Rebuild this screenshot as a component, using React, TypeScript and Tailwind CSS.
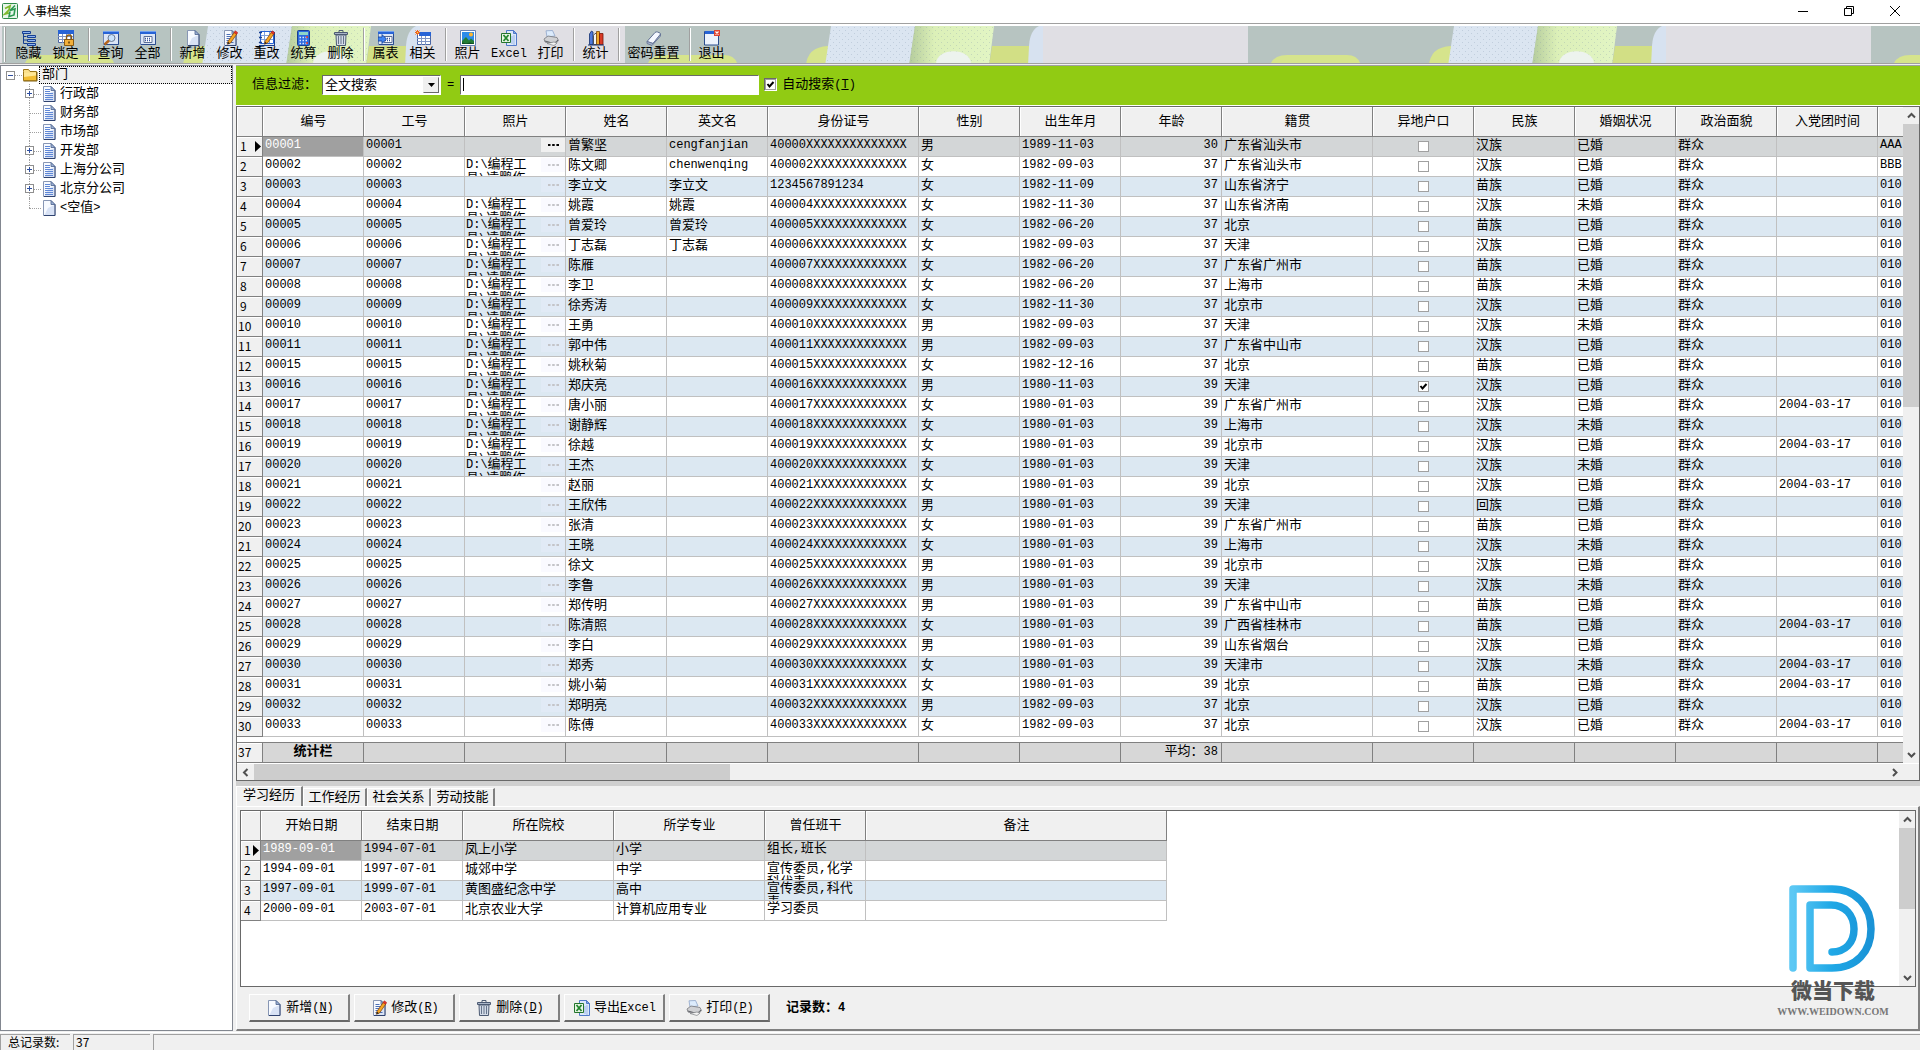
import React from 'react';

const CJK = "font-['Liberation_Mono','Noto_Sans_CJK_SC',monospace]";

/* ---------- icons ---------- */

function Svg({ children }: { children: React.ReactNode }) {
  return (
    <svg width="16" height="16" viewBox="0 0 16 16" aria-hidden="true" className="shrink-0">
      {children}
    </svg>
  );
}

const PageShape = () => (
  <>
    <path d="M2.500 .5h7.500l4 4v11h-11.500z" fill="#f7faff" stroke="#8796b4" />
    <path d="M7 8l6.500-3v10H3.500z" fill="#cfdcf3" opacity=".8" />
    <path d="M14 4.500v11H3" fill="none" stroke="#2f4370" />
    <path d="M10 .5v4h4z" fill="#9db2d6" stroke="#4a5f8c" strokeWidth=".8" />
  </>
);
const PencilShape = () => (
  <>
    <path d="M6 11.500L12.500 2l2.500 1.700L8.500 13l-3 1.200z" fill="#f5a623" stroke="#8a4b10" strokeWidth=".8" />
    <path d="M12 2.700L13.300.8l2.400 1.700-1.200 1.900z" fill="#e3362b" stroke="#a31d14" strokeWidth=".5" />
    <path d="M5.500 14.200l.5-2.400 1.900 1.400z" fill="#222" />
  </>
);
const WindowShape = () => (
  <>
    <path d="M.5 1.500h15v13H.5z" fill="#dbe5f6" stroke="#6f86b4" />
    <path d="M15.500 2v12.500H1" fill="none" stroke="#2b4c8f" />
    <path d="M0 1h16v3H0z" fill="#2763d6" />
    <path d="M0 1h16v1H0z" fill="#6fa0f0" />
  </>
);
const GridDots = ({ x }: { x: number }) => (
  <>
    <path d={`M${x} 6.500h8v6h-8z`} fill="#fff" stroke="#5a6d96" />
    <path d={`M${x + 1} 8.500h6M${x + 1} 10.500h6`} stroke="#3c57a0" strokeDasharray="1 1" strokeWidth="1.500" />
  </>
);

const icons: Record<string, React.ReactNode> = {
  tree: (
    <Svg>
      <path d="M2.500 4v9.500h4M2.500 6.500h3M2.500 10h4" fill="none" stroke="#173f91" />
      <path d="M1.500 1.500h8v2h-8zM6.500 5.500h8v2h-8zM6.500 9.500h8v2h-8zM6.500 13.500h8v2h-8z" fill="#8db4f4" stroke="#173f91" />
    </Svg>
  ),
  lock: (
    <Svg>
      <path d="M.5 .5h15v12H.5z" fill="#fff" stroke="#4a66a5" />
      <path d="M0 0h16v4H0z" fill="#2763d6" />
      <path d="M0 6.500h15M0 9.500h15M4.500 4v9M8.500 4v9M12.500 4v9" stroke="#7e93c4" />
      <path d="M8.500 10V7.500a2.500 2.500 0 015 0V10" fill="none" stroke="#8a5a12" strokeWidth="1.400" />
      <path d="M6.500 9.500h9v6h-9z" fill="#f3b13c" stroke="#8a5a12" />
      <path d="M11 11.500v2" stroke="#5b3a06" strokeWidth="1.500" />
    </Svg>
  ),
  query: (
    <Svg>
      <WindowShape />
      <circle cx="8.500" cy="8" r="3.500" fill="#c9e2fb" stroke="#6b7b94" />
      <path d="M6 10.500l-4.500 4" stroke="#b5651d" strokeWidth="2.500" />
    </Svg>
  ),
  all: (
    <Svg>
      <WindowShape />
      <GridDots x={4} />
    </Svg>
  ),
  page: (
    <Svg>
      <PageShape />
    </Svg>
  ),
  edit: (
    <Svg>
      <PageShape />
      <path d="M4.500 4.500h4M4.500 6.500h6M4.500 8.500h4M4.500 10.500h3M4.500 12.500h7" stroke="#4b6fb5" />
      <PencilShape />
    </Svg>
  ),
  batch: (
    <Svg>
      <path d="M1.500 1.500h13v12h-13z" fill="#fff" stroke="#2763d6" />
      <path d="M0 15.500h16M15.500 2v13" stroke="#173f91" />
      <path d="M2 5.500h12M2 9.500h12M5.500 2v11M10.500 2v11" stroke="#7fa0dc" />
      <path d="M0 2.500h3M0 7.500h3M0 12.500h3" stroke="#173f91" strokeWidth="1.500" />
      <PencilShape />
    </Svg>
  ),
  calc: (
    <Svg>
      <rect x="1.500" y=".5" width="12" height="15" rx="1" fill="#2d6be0" stroke="#173f91" />
      <path d="M3 2h9v3H3z" fill="#8fd6c8" />
      <path d="M3.500 7.500h8M3.500 10.500h8M3.500 13.500h8" stroke="#dfe9ff" strokeWidth="1.500" strokeDasharray="1.500 1.500" />
      <path d="M10 7h2M10 13h2" stroke="#e3362b" strokeWidth="1.500" />
    </Svg>
  ),
  trash: (
    <Svg>
      <path d="M6 2V.5h4V2" fill="none" stroke="#4c5a73" />
      <path d="M1.500 2.500h13v2h-13z" fill="#a9b5c8" stroke="#4c5a73" />
      <path d="M3 5h10l-.5 10.500h-9z" fill="#d3dbe7" stroke="#4c5a73" />
      <path d="M5.500 6v8M8 6v8M10.500 6v8" stroke="#66748c" />
    </Svg>
  ),
  subTable: (
    <Svg>
      <WindowShape />
      <GridDots x={6} />
      <path d="M0 7h4V4.500L8.500 9 4 13.500V11H0z" fill="#3f84f2" stroke="#123c93" strokeWidth=".8" />
    </Svg>
  ),
  related: (
    <Svg>
      <path d="M2.500 3.500h13v11h-13z" fill="#fff" stroke="#4a66a5" />
      <path d="M4 2h12v4H4z" fill="#2763d6" />
      <path d="M2 8.500h13M2 11.500h13M6.500 6v9M10.500 6v9" stroke="#7e93c4" />
      <path d="M2.500 0v5M0 2.500h5M.5.5l4 4M4.500.5l-4 4" stroke="#f0661e" />
      <path d="M2 2h1v1H2z" fill="#ffe45a" />
    </Svg>
  ),
  photo: (
    <Svg>
      <path d="M.5 .5h15v15H.5z" fill="#fff" stroke="#6883b5" />
      <path d="M2 2h12v9H2z" fill="#2c8bea" />
      <circle cx="11" cy="4.500" r="2" fill="#ffb52e" />
      <path d="M2 14v-3l4-4 3 3.500 2-2 3 2.500v3z" fill="#237c35" />
      <path d="M2 12.500l4 1 4-1 4 1V14H2z" fill="#0e4c23" />
    </Svg>
  ),
  excel: (
    <Svg>
      <path d="M5.500 .5h7l3 3v12h-10z" fill="#dce8fa" stroke="#4f79c9" />
      <path d="M12.500.5v3h3z" fill="#7ea4e2" stroke="#4f79c9" />
      <path d="M11 6v8M13 5v10" stroke="#9db9e8" />
      <path d="M.5 3.500h9v9h-9z" fill="#e9f6e6" stroke="#24752c" />
      <path d="M2.500 5l5 6M7.500 5l-5 6" stroke="#24872f" strokeWidth="1.800" />
    </Svg>
  ),
  print: (
    <Svg>
      <path d="M4 7L3 .8 9.500 .5 12 6z" fill="#dcebfc" stroke="#8ea5c9" strokeWidth=".8" />
      <path d="M1 9l4-3 9 1.500 1.500 3-3.500 4L2 12z" fill="#d0d1d4" stroke="#77797e" strokeWidth=".8" />
      <path d="M2 11l9 2.500 4-3.500" fill="none" stroke="#606268" />
      <path d="M4 13.500l7 2 3-2.500-3-1z" fill="#f4f4f4" stroke="#808287" strokeWidth=".7" />
    </Svg>
  ),
  books: (
    <Svg>
      <path d="M1.500 4l2-3 1.500 1v12.500H1.500z" fill="#4f79d9" stroke="#14306f" strokeWidth=".8" />
      <path d="M5.500 5.500l1.500-2h2v11H5.500z" fill="#f4f4f4" stroke="#333" strokeWidth=".8" />
      <path d="M8.500 3.500V1.500h3v13h-3z" fill="#f0a92c" stroke="#7d4a05" strokeWidth=".8" />
      <path d="M11.500 3.500h3.500v11h-3.500z" fill="#d93a26" stroke="#751509" strokeWidth=".8" />
      <path d="M0 15h16" stroke="#14306f" />
    </Svg>
  ),
  eraser: (
    <Svg>
      <path d="M1 11.500L9 2.500q1-1 2.500-.5l2.500 1q1 .8.3 1.800L7 13.500z" fill="#f4f7ff" stroke="#5f6f92" />
      <path d="M1 11.500v2l5 2 8.500-9.500V4L7 13.500z" fill="#a8b4d0" stroke="#5f6f92" strokeWidth=".8" />
    </Svg>
  ),
  exit: (
    <Svg>
      <path d="M.5 1.500h14v13.500H.5z" fill="#eef3fc" stroke="#2b4c8f" />
      <path d="M1 1h12v3H1z" fill="#2763d6" />
      <path d="M10 0h6v6h-6z" fill="#e0442f" />
      <path d="M11.500 1.500l3 3M14.500 1.500l-3 3" stroke="#fff" strokeWidth="1.200" />
    </Svg>
  ),
  folder: (
    <Svg>
      <path d="M1.500 4.500v-2h5l1.500 2h6.500v9h-13z" fill="#fbe08b" stroke="#9c7416" />
      <path d="M2 6h12v7.500H2z" fill="#f3bd32" />
      <path d="M2 6h12v2.500L2 10z" fill="#ffe795" />
      <path d="M1.500 14h13.500V5" fill="none" stroke="#7a5a0d" />
    </Svg>
  ),
  doc: (
    <Svg>
      <PageShape />
      <path d="M4 3.500h5M4 5.500h5M4 7.500h8M4 9.500h8M4 11.500h8M4 13.500h8" stroke="#5f87d6" />
    </Svg>
  ),
};

function Chevron({ dir }: { dir: 'up' | 'down' | 'left' | 'right' }) {
  const d = {
    up: 'M1 6.500L4.500 3 8 6.500',
    down: 'M1 3L4.500 6.500 8 3',
    left: 'M6.500 1L3 4.500 6.500 8',
    right: 'M3 1l3.500 3.500L3 8',
  }[dir];
  return (
    <svg width="9" height="9" viewBox="0 0 9 9" aria-hidden="true">
      <path d={d} fill="none" stroke="#505050" strokeWidth="2" />
    </svg>
  );
}

/* ---------- window chrome ---------- */

function TitleBar() {
  return (
    <header className="flex h-[23px] shrink-0 items-center bg-white pb-px pr-0.5">
      <svg width="16" height="16" viewBox="0 0 16 16" className="ml-0.5" aria-hidden="true">
        <rect x=".5" y=".5" width="15" height="15" rx="1" fill="#e8f6ea" stroke="#2e8b4a" />
        <path d="M3 5.500l5-2.500-1 4-4 4 4-1" fill="none" stroke="#7fb92d" strokeWidth="1.800" />
        <path d="M13 2.500L8 7.500l5-1.500-1 6-5 1.500 1-5" fill="none" stroke="#2c9a52" strokeWidth="1.600" />
      </svg>
      <h1 className="ml-[5px] flex-1 font-['Noto_Sans_CJK_SC',sans-serif] text-xs leading-5">人事档案</h1>
      <button type="button" aria-label="最小化" className="flex w-[46px] justify-center">
        <svg width="10" height="10" viewBox="0 0 10 10"><path d="M0 5.500h10" stroke="#000" /></svg>
      </button>
      <button type="button" aria-label="还原" className="flex w-[46px] justify-center">
        <svg width="10" height="10" viewBox="0 0 10 10">
          <path d="M.5 2.500h7v7h-7zM2.500 2.500v-2h7v7h-2" fill="none" stroke="#000" />
        </svg>
      </button>
      <button type="button" aria-label="关闭" className="flex w-[46px] justify-center">
        <svg width="10" height="10" viewBox="0 0 10 10"><path d="M0 0l10 10M10 0L0 10" stroke="#000" /></svg>
      </button>
    </header>
  );
}

function ToolbarBackdrop() {
  return (
    <svg className="absolute inset-0 h-full w-full" aria-hidden="true">
      <defs>
        <pattern id="dots" width="6" height="6" patternUnits="userSpaceOnUse">
          <path d="M1 1h1v1H1zM4 4h1v1H4z" fill="#7d93a8" opacity=".28" />
        </pattern>
        <linearGradient id="leaf" x1="0" x2="1">
          <stop offset="0" stopColor="#b4cb9c" />
          <stop offset=".3" stopColor="#dcf0b8" />
          <stop offset="1" stopColor="#e2f5c4" />
        </linearGradient>
        <pattern id="tile" x="2" y="0" width="623" height="40" patternUnits="userSpaceOnUse">
          <path d="M0 0h623v40H0z" fill="#e0dfe4" />
          <path d="M0 0h418v40H0z" fill="#b7c4c1" />
          <path d="M23 37q4-8 16-8h60q10 0 13 8v3H23z" fill="#d6e48c" />
          <path d="M181 40q1-19 22-20v20z" fill="#d6e48c" />
          <path d="M206 0h84l-6 40h-84z" fill="#dbe5f1" />
          <path d="M290 0h79l-5 40h-80z" fill="url(#leaf)" />
          <path d="M206 0h163l-5 40H200z" fill="url(#dots)" />
          <path d="M311 38c0-17 35-17 35 0z" fill="#edf3ee" />
          <path d="M367 20h38v20h-41z" fill="#d2df85" />
          <path d="M418 0h-4q-9 4-10 20l-1 20h15z" fill="#d7e2f0" />
        </pattern>
      </defs>
      <rect width="100%" height="100%" fill="url(#tile)" />
    </svg>
  );
}

type Tool = { label: string; icon: string; size?: 'md' | 'lg' } | null;
const tools: Tool[] = [
  { label: '隐藏', icon: 'tree' }, { label: '锁定', icon: 'lock' }, null,
  { label: '查询', icon: 'query' }, { label: '全部', icon: 'all' }, null,
  { label: '新增', icon: 'page' }, { label: '修改', icon: 'edit' }, { label: '重改', icon: 'batch' },
  { label: '统算', icon: 'calc' }, { label: '删除', icon: 'trash' }, null,
  { label: '属表', icon: 'subTable' }, { label: '相关', icon: 'related' }, null,
  { label: '照片', icon: 'photo' }, { label: 'Excel', icon: 'excel', size: 'md' }, { label: '打印', icon: 'print' }, null,
  { label: '统计', icon: 'books' }, null,
  { label: '密码重置', icon: 'eraser', size: 'lg' }, null,
  { label: '退出', icon: 'exit' },
];

function Toolbar() {
  return (
    <div className="shrink-0 border-t border-[#a0a0a0] bg-white pt-0.5">
      <div className="relative h-[38px] overflow-hidden border-b border-[#a0a0a0]">
        <ToolbarBackdrop />
        <div className="relative flex h-full items-stretch pl-1">
          <div className="my-px mr-1 w-[2px] border-l border-white bg-[#a0a0a0]" />
          {tools.map((t, i) =>
            t ? (
              <button
                key={t.label}
                type="button"
                className={`flex flex-col items-center pt-1 ${t.size === 'lg' ? 'w-[63px]' : t.size === 'md' ? 'w-[46px]' : 'w-[37px]'}`}
              >
                {icons[t.icon]}
                <span className={t.label === 'Excel' ? 'text-xs leading-4' : 'text-[13px] leading-4'}>{t.label}</span>
              </button>
            ) : (
              <div key={`s${i}`} className="my-0.5 ml-1 mr-0.5 w-[2px] border-r border-white bg-[#a0a0a0]" />
            ),
          )}
        </div>
      </div>
    </div>
  );
}

/* ---------- department tree ---------- */

const departments = [
  { name: '行政部', open: true }, { name: '财务部' }, { name: '市场部' }, { name: '开发部', open: true },
  { name: '上海分公司', open: true }, { name: '北京分公司', open: true }, { name: '<空值>', blank: true },
];

function Expander({ minus, label }: { minus?: boolean; label: string }) {
  return (
    <button type="button" aria-label={label} className="relative z-10 flex size-[9px] items-center justify-center border border-[#8f8f8f] bg-white">
      <svg width="5" height="5" viewBox="0 0 5 5">
        <path d={minus ? 'M0 2.500h5' : 'M0 2.500h5M2.500 0v5'} stroke="#2f4f9f" />
      </svg>
    </button>
  );
}

function DepartmentTree() {
  return (
    <nav aria-label="部门" className="w-[233px] shrink-0 border border-[#828790] bg-white text-[13px]">
      <div className="flex h-[18px] items-center pl-[5px]">
        <Expander minus label="折叠 部门" />
        <span className="w-[7px] border-t border-dotted border-[#a0a0a0]" />
        {icons.folder}
        <span className="ml-px flex-1 border border-dotted border-black bg-[#f0f0f0] pl-[2px] leading-[16px]">部门</span>
      </div>
      <ul>
        {departments.map((d, i) => (
          <li key={d.name} className="flex h-[19px] items-center pl-6">
            <span className="relative flex h-full w-4 items-center">
              <span className={`absolute left-1 top-0 border-l border-dotted border-[#a0a0a0] ${i === departments.length - 1 ? 'h-1/2' : 'h-full'}`} />
              <span className="absolute left-1 right-0 top-1/2 border-t border-dotted border-[#a0a0a0]" />
              {d.open && <Expander label={`展开 ${d.name}`} />}
            </span>
            {d.blank ? icons.page : icons.doc}
            <span className="ml-[3px] leading-[17px]">
              {d.blank ? (<><span className="text-xs">&lt;</span>空值<span className="text-xs">&gt;</span></>) : d.name}
            </span>
          </li>
        ))}
      </ul>
    </nav>
  );
}

/* ---------- filter ---------- */

const SUNKEN = 'border border-t-[#696969] border-l-[#696969] border-r-white border-b-white bg-white';

function TickBox({ checked, label, id }: { checked?: boolean; label?: string; id?: string }) {
  return (
    <span className="relative inline-block size-[11px]">
      <input
        id={id}
        type="checkbox"
        defaultChecked={checked}
        aria-label={label}
        className="peer block size-[11px] appearance-none border border-[#a0a0a0] bg-white"
      />
      <svg width="11" height="11" viewBox="0 0 11 11" className="pointer-events-none absolute inset-0 hidden peer-checked:block">
        <path d="M2.500 5l2 2.500 4-4.500" fill="none" stroke="#000" strokeWidth="2" />
      </svg>
    </span>
  );
}

function FilterBar() {
  return (
    <form className="flex h-[39px] items-center bg-[#91cb13] pb-0.5 pl-4 text-[13px]" onSubmit={(e) => e.preventDefault()}>
      <label htmlFor="field" className="w-[70px]">信息过滤：</label>
      <div className={`relative h-5 w-[119px] ${SUNKEN}`}>
        <select id="field" className="h-full w-full appearance-none bg-transparent pl-[2px] leading-[16px] outline-none">
          <option>全文搜索</option>
        </select>
        <span className="pointer-events-none absolute bottom-px right-px top-px flex w-4 items-center justify-center border border-b-[#696969] border-l-[#f0f0f0] border-r-[#696969] border-t-[#f0f0f0] bg-[#f0f0f0]">
          <svg width="7" height="4" viewBox="0 0 7 4"><path d="M0 0h7L3.500 4z" /></svg>
        </span>
      </div>
      <span className="mx-1.5 text-xs">=</span>
      <div className={`flex h-5 w-[299px] items-center ${SUNKEN}`}>
        <span className="ml-0.5 h-[13px] w-px bg-black" />
        <input aria-label="搜索内容" className="h-full min-w-0 flex-1 bg-transparent outline-none" />
      </div>
      <span className="ml-[5px] flex size-[13px] items-center justify-center border border-b-white border-l-[#696969] border-r-white border-t-[#696969]">
        <TickBox id="auto" checked />
      </span>
      <label htmlFor="auto" className="ml-[5px]">
        自动搜索<span className="text-xs">(<u>T</u>)</span>
      </label>
    </form>
  );
}

/* ---------- main grid ---------- */

const columns = [
  '编号', '工号', '照片', '姓名', '英文名', '身份证号', '性别', '出生年月', '年龄', '籍贯',
  '异地户口', '民族', '婚姻状况', '政治面貌', '入党团时间', '',
];

/* code, photo, name, English name, sex, birthday, age, origin, ethnicity, married, joined */
type Person = [string, number, string, string, string, string, number, string, string, number, number];
const people: Person[] = [
  ['00001', 0, '曾繁坚', 'cengfanjian', '男', '1989-11-03', 30, '广东省汕头市', '汉', 1, 0],
  ['00002', 1, '陈文卿', 'chenwenqing', '女', '1982-09-03', 37, '广东省汕头市', '汉', 1, 0],
  ['00003', 0, '李立文', '李立文', '女', '1982-11-09', 37, '山东省济宁', '苗', 1, 0],
  ['00004', 1, '姚霞', '姚霞', '女', '1982-11-30', 37, '山东省济南', '汉', 0, 0],
  ['00005', 1, '曾爱玲', '曾爱玲', '女', '1982-06-20', 37, '北京', '苗', 1, 0],
  ['00006', 1, '丁志磊', '丁志磊', '女', '1982-09-03', 37, '天津', '汉', 1, 0],
  ['00007', 1, '陈雁', '', '女', '1982-06-20', 37, '广东省广州市', '苗', 1, 0],
  ['00008', 1, '李卫', '', '女', '1982-06-20', 37, '上海市', '苗', 0, 0],
  ['00009', 1, '徐秀涛', '', '女', '1982-11-30', 37, '北京市', '汉', 1, 0],
  ['00010', 1, '王勇', '', '男', '1982-09-03', 37, '天津', '汉', 0, 0],
  ['00011', 1, '郭中伟', '', '男', '1982-09-03', 37, '广东省中山市', '汉', 1, 0],
  ['00015', 1, '姚秋菊', '', '女', '1982-12-16', 37, '北京', '苗', 1, 0],
  ['00016', 1, '郑庆亮', '', '男', '1980-11-03', 39, '天津', '汉', 1, 0],
  ['00017', 1, '唐小丽', '', '女', '1980-01-03', 39, '广东省广州市', '汉', 1, 1],
  ['00018', 1, '谢静辉', '', '女', '1980-01-03', 39, '上海市', '汉', 0, 0],
  ['00019', 1, '徐越', '', '女', '1980-01-03', 39, '北京市', '汉', 1, 1],
  ['00020', 1, '王杰', '', '女', '1980-01-03', 39, '天津', '汉', 0, 0],
  ['00021', 0, '赵丽', '', '女', '1980-01-03', 39, '北京', '汉', 1, 1],
  ['00022', 0, '王欣伟', '', '男', '1980-01-03', 39, '天津', '回', 1, 0],
  ['00023', 0, '张清', '', '女', '1980-01-03', 39, '广东省广州市', '苗', 1, 0],
  ['00024', 0, '王晓', '', '女', '1980-01-03', 39, '上海市', '汉', 0, 0],
  ['00025', 0, '徐文', '', '男', '1980-01-03', 39, '北京市', '汉', 1, 0],
  ['00026', 0, '李鲁', '', '男', '1980-01-03', 39, '天津', '汉', 0, 0],
  ['00027', 0, '郑传明', '', '男', '1980-01-03', 39, '广东省中山市', '苗', 1, 0],
  ['00028', 0, '陈清照', '', '女', '1980-01-03', 39, '广西省桂林市', '苗', 1, 1],
  ['00029', 0, '李白', '', '男', '1980-01-03', 39, '山东省烟台', '汉', 1, 0],
  ['00030', 0, '郑秀', '', '女', '1980-01-03', 39, '天津市', '汉', 0, 1],
  ['00031', 0, '姚小菊', '', '女', '1980-01-03', 39, '北京', '苗', 1, 1],
  ['00032', 0, '郑明亮', '', '男', '1982-09-03', 37, '北京', '汉', 1, 0],
  ['00033', 0, '陈傅', '', '女', '1982-09-03', 37, '北京', '汉', 1, 1],
];

function idNumber(code: string) {
  if (code === '00001') return '40000XXXXXXXXXXXXXX';
  if (code === '00003') return '1234567891234';
  return `4${code}XXXXXXXXXXXXX`;
}

const HEAD = 'border-b border-r border-[#808080] bg-[#f0f0f0] p-0 text-[13px] font-normal';

function HeadCell({ children }: { children?: React.ReactNode }) {
  return (
    <th scope="col" className={HEAD}>
      <div className="flex h-[29px] items-center justify-center overflow-hidden border-l border-t border-white">{children}</div>
    </th>
  );
}

function IndexCell({ n, current }: { n: number; current?: boolean }) {
  return (
    <th scope="row" className="border-b border-r border-[#808080] bg-[#f0f0f0] p-0 font-normal">
      <div className="flex h-[19px] items-center justify-between overflow-hidden border-l border-t border-white pb-0.5 font-['Noto_Sans_CJK_SC',sans-serif] text-xs leading-4">
        <span className={n < 10 ? 'pl-0.5' : ''}>{n}</span>
        {current && (
          <svg width="6" height="11" viewBox="0 0 6 11" className="mr-px shrink-0"><path d="M0 0l6 5.500L0 11z" /></svg>
        )}
      </div>
    </th>
  );
}

function TextCell({ text, right, selected, wrap }: { text: string; right?: boolean; selected?: boolean; wrap?: boolean }) {
  const latin = /^[\x20-\x7e]*$/.test(text);
  return (
    <td className={`border-b border-r border-[#c0c0c0] p-0 ${selected ? 'bg-[#a0a0a0] text-white' : ''}`}>
      <div
        className={`h-[19px] overflow-hidden pl-[2px] ${right ? 'pr-[3px] text-right' : ''} ${latin ? 'text-xs' : 'text-[13px]'} ${wrap ? 'w-[90px] whitespace-normal break-all pt-px leading-[14px]' : 'whitespace-nowrap leading-[17px]'}`}
      >
        {text}
      </div>
    </td>
  );
}

function rowTone(i: number) {
  return i === 0 ? 'bg-[#d3d6d7]' : i % 2 === 0 ? 'bg-[#dce8f2]' : 'bg-white';
}

function PhotoCell({ path, active, label }: { path: boolean; active: boolean; label: string }) {
  return (
    <td className="border-b border-r border-[#c0c0c0] p-0">
      <div className="flex h-[19px] items-start justify-between overflow-hidden">
        <span className="w-[70px] break-all pl-px pt-px text-[13px] leading-[14px]">
          {path && (<><span className="text-xs leading-[14px]">D:\</span>编程工具<span className="text-xs leading-[14px]">\</span>凌鹏作</>)}
        </span>
        <button
          type="button"
          aria-label={`选择照片 ${label}`}
          className={`mt-px flex h-3.5 w-6 items-center justify-center ${active ? 'bg-[#f0f0f0] text-black' : 'bg-[#f0f0ff]/30 text-[#c4c4c8]'}`}
        >
          <svg width="11" height="2" viewBox="0 0 11 2"><path d="M0 0h2.500v2H0zM4.200 0h2.500v2H4.200zM8.400 0H11v2H8.400z" fill="currentColor" /></svg>
        </button>
      </div>
    </td>
  );
}

function MainColumns() {
  return (
    <colgroup>
      <col className="w-[26px]" />
      {columns.map((c, i) => (
        <col key={i} className={c === '身份证号' || c === '籍贯' ? 'w-[151px]' : 'w-[101px]'} />
      ))}
    </colgroup>
  );
}

function VScroll({ top }: { top: 'tall' | 'short' }) {
  return (
    <div className="flex w-4 shrink-0 flex-col items-center bg-[#f0f0f0]" aria-hidden="true">
      <span className="flex h-[17px] shrink-0 items-center"><Chevron dir="up" /></span>
      <span className={`w-full bg-[#cdcdcd] ${top === 'tall' ? 'h-[283px]' : 'h-[81px]'}`} />
      <span className="flex-1" />
      <span className="flex h-[17px] shrink-0 items-center"><Chevron dir="down" /></span>
    </div>
  );
}

function StaffGrid() {
  return (
    <section aria-label="人事档案" className="shrink-0 border border-[#696969] bg-white">
      <div className="flex">
        <div className="min-w-0 flex-1 overflow-hidden">
          <table className="w-[1742px] table-fixed border-separate border-spacing-0">
            <MainColumns />
            <thead>
              <tr>
                <HeadCell />
                {columns.map((c, i) => <HeadCell key={i}>{c}</HeadCell>)}
              </tr>
            </thead>
            <tbody>
              {people.map(([code, photo, name, en, sex, birth, age, origin, nation, married, joined], i) => (
                <tr key={code} className={rowTone(i)}>
                  <IndexCell n={i + 1} current={i === 0} />
                  <TextCell text={code} selected={i === 0} />
                  <TextCell text={code} />
                  <PhotoCell path={photo === 1} active={i === 0} label={name} />
                  <TextCell text={name} />
                  <TextCell text={en} />
                  <TextCell text={idNumber(code)} />
                  <TextCell text={sex} />
                  <TextCell text={birth} />
                  <TextCell text={String(age)} right />
                  <TextCell text={origin} />
                  <td className="border-b border-r border-[#c0c0c0] p-0">
                    <div className="flex h-[19px] items-center justify-center">
                      <TickBox checked={code === '00016'} label={`异地户口 ${name}`} />
                    </div>
                  </td>
                  <TextCell text={`${nation}族`} />
                  <TextCell text={married ? '已婚' : '未婚'} />
                  <TextCell text="群众" />
                  <TextCell text={joined ? '2004-03-17' : ''} />
                  <TextCell text={i === 0 ? 'AAA' : i === 1 ? 'BBB' : '010-'} />
                </tr>
              ))}
            </tbody>
          </table>
          <table className="mt-[5px] w-[1742px] table-fixed border-separate border-spacing-0 border-t border-[#808080]">
            <MainColumns />
            <tbody>
              <tr className="bg-[#d7d7d7] text-[13px]">
                <IndexCell n={37} />
                {columns.map((c, i) => (
                  <td key={i} className="border-b border-r border-[#808080] p-0">
                    <div className={`h-[19px] leading-[17px] ${i === 0 ? 'text-center font-bold' : 'pr-[3px] text-right'}`}>
                      {i === 0 && '统计栏'}
                      {c === '年龄' && (<>平均：<span className="text-xs">38</span></>)}
                    </div>
                  </td>
                ))}
              </tr>
            </tbody>
          </table>
        </div>
        <VScroll top="tall" />
      </div>
      <div className="mt-px flex h-4 items-center bg-[#f0f0f0] pr-4" aria-hidden="true">
        <span className="flex w-[17px] justify-center"><Chevron dir="left" /></span>
        <span className="h-full w-2/7 bg-[#cdcdcd]" />
        <span className="flex-1" />
        <span className="flex w-[17px] justify-center"><Chevron dir="right" /></span>
      </div>
    </section>
  );
}

/* ---------- detail panel ---------- */

const schoolCols = ['开始日期', '结束日期', '所在院校', '所学专业', '曾任班干', '备注'];
const schools = [
  ['1989-09-01', '1994-07-01', '凤上小学', '小学', '组长,班长', ''],
  ['1994-09-01', '1997-07-01', '城郊中学', '中学', '宣传委员,化学科代表', ''],
  ['1997-09-01', '1999-07-01', '黄图盛纪念中学', '高中', '宣传委员,科代表', ''],
  ['2000-09-01', '2003-07-01', '北京农业大学', '计算机应用专业', '学习委员', ''],
];

function Tabs() {
  const base = 'border-l border-t border-l-white border-t-white text-center text-[13px]';
  return (
    <div role="tablist" className="flex items-end">
      <button type="button" role="tab" aria-selected="true" className={`${base} h-5 w-[67px] border-r-2 border-r-[#808080] bg-[#f0f0f0] pb-0.5 leading-4`}>学习经历</button>
      {['工作经历', '社会关系', '劳动技能'].map((t) => (
        <button key={t} type="button" role="tab" aria-selected="false" className={`${base} h-[18px] w-16 border-r-2 border-r-[#808080] leading-4`}>{t}</button>
      ))}
    </div>
  );
}

function ActionButton({ icon, children }: { icon: string; children: React.ReactNode }) {
  return (
    <button
      type="button"
      className="flex h-7 w-[101px] items-center justify-center gap-1 border-b-2 border-l border-r-2 border-t border-b-[#696969] border-l-white border-r-[#808080] border-t-white bg-[#f0f0f0] pl-0.5 pt-px text-[13px]"
    >
      {icons[icon]}
      <span>{children}</span>
    </button>
  );
}

const Key = ({ k }: { k: string }) => <span className="text-xs">(<u>{k}</u>)</span>;

function Watermark() {
  return (
    <div className="pointer-events-none absolute bottom-3 right-8 flex w-[110px] flex-col items-center">
      <svg width="88" height="88" viewBox="0 0 88 88" aria-hidden="true">
        <defs>
          <linearGradient id="brand" x1="0" x2="1">
            <stop offset="0" stopColor="#5cc8f4" />
            <stop offset=".5" stopColor="#1fa8e6" />
            <stop offset="1" stopColor="#1a93d6" />
          </linearGradient>
        </defs>
        <path
          d="M4 83V4h39c24 0 39 17 39 40s-15 39-39 39H21V20h21c14 0 23 10 23 24s-9 23-22 23"
          fill="none" stroke="url(#brand)" strokeWidth="7.500" strokeLinecap="round" strokeLinejoin="round"
        />
      </svg>
      <p className="whitespace-nowrap font-['Noto_Sans_CJK_SC',sans-serif] text-[21px] font-black leading-8 text-[#555]">微当下载</p>
      <p className="whitespace-nowrap font-['Liberation_Serif',serif] text-[10px] font-bold leading-[14px] text-[#777]">WWW.WEIDOWN.COM</p>
    </div>
  );
}

function DetailPanel() {
  return (
    <section aria-label="学习经历" className="relative flex min-h-0 flex-1 flex-col bg-[#f0f0f0]">
      <Tabs />
      <div className="flex min-h-0 flex-1 flex-col border-b-2 border-l border-r-2 border-t border-b-[#808080] border-l-white border-r-[#808080] border-t-white pl-[3px] pr-[2px] pt-[3px]">
        <div className="flex min-h-0 flex-1 border border-[#696969] bg-white">
          <div className="min-w-0 flex-1 overflow-hidden">
            <table className="w-[926px] table-fixed border-separate border-spacing-0">
              <colgroup>
                <col className="w-5" /><col className="w-[101px]" /><col className="w-[101px]" /><col className="w-[151px]" />
                <col className="w-[151px]" /><col className="w-[101px]" /><col className="w-[301px]" />
              </colgroup>
              <thead>
                <tr>
                  <HeadCell />
                  {schoolCols.map((c) => <HeadCell key={c}>{c}</HeadCell>)}
                </tr>
              </thead>
              <tbody>
                {schools.map((r, i) => (
                  <tr key={r[0]} className={rowTone(i)}>
                    <IndexCell n={i + 1} current={i === 0} />
                    {r.map((t, j) => <TextCell key={j} text={t} selected={i === 0 && j === 0} wrap={j === 4} />)}
                  </tr>
                ))}
              </tbody>
            </table>
          </div>
          <VScroll top="short" />
        </div>
        <div className="flex items-center gap-1 px-[9px] py-[7px]">
          <ActionButton icon="page">新增<Key k="N" /></ActionButton>
          <ActionButton icon="edit">修改<Key k="R" /></ActionButton>
          <ActionButton icon="trash">删除<Key k="D" /></ActionButton>
          <ActionButton icon="excel">导出<span className="text-xs"><u>E</u>xcel</span></ActionButton>
          <ActionButton icon="print">打印<Key k="P" /></ActionButton>
          <strong className="ml-3 text-[13px]">记录数：<span className="text-xs">4</span></strong>
        </div>
      </div>
      <Watermark />
    </section>
  );
}

function StatusBar() {
  const cell = 'h-4 border-l border-t border-[#a0a0a0]';
  return (
    <footer className="flex shrink-0 gap-[3px] border-t border-white bg-[#f0f0f0] pt-px font-['Noto_Sans_CJK_SC',sans-serif] text-xs leading-[14px]">
      <span className={`${cell} w-[70px] pl-[7px]`}>总记录数:</span>
      <span className={`${cell} w-[77px] pl-[2px]`}>37</span>
      <span className={`${cell} flex-1`} />
    </footer>
  );
}

export default function App() {
  return (
    <div className={`flex h-screen min-h-[900px] flex-col overflow-hidden bg-[#f0f0f0] text-black ${CJK}`}>
      <TitleBar />
      <Toolbar />
      <div className="flex min-h-0 flex-1 gap-[3px] pt-px">
        <DepartmentTree />
        <main className="flex min-w-0 flex-1 flex-col">
          <div className="border-b border-t border-b-white border-t-[#a0a0a0]">
            <FilterBar />
          </div>
          <StaffGrid />
          <div className="h-[5px] shrink-0 bg-[#cfcfcf]" />
          <DetailPanel />
        </main>
      </div>
      <div className="h-px shrink-0" />
      <StatusBar />
    </div>
  );
}
